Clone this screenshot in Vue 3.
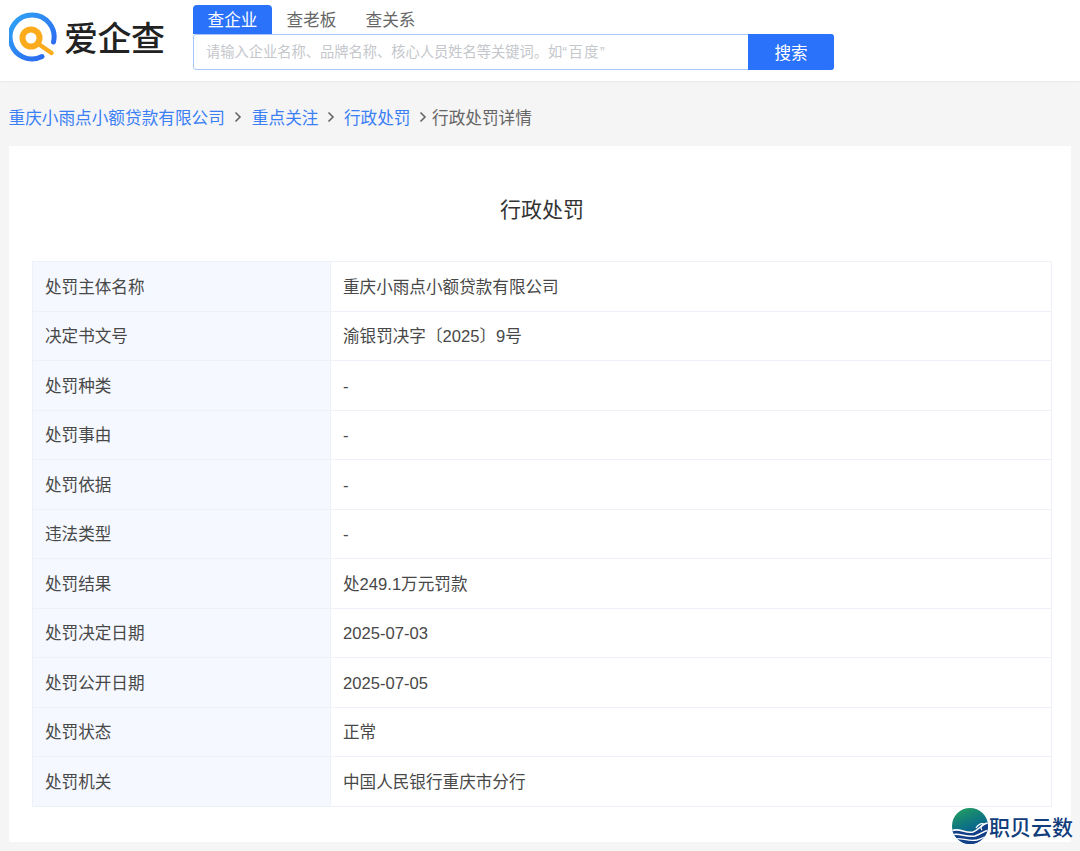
<template>
  <div class="page">
    <header class="top">
      <div class="logo">
        <svg class="logo-mark" width="50" height="50" viewBox="0 0 50 50">
          <defs>
            <linearGradient id="ring" x1="0" y1="0" x2="1" y2="1">
              <stop offset="0" stop-color="#2fa5f5" />
              <stop offset="1" stop-color="#2b62f0" />
            </linearGradient>
          </defs>
          <path d="M33 44.600A22 22 0 1 1 44.500 30" fill="none" stroke="url(#ring)" stroke-width="5" stroke-linecap="round" />
          <circle cx="22" cy="26" r="8.500" fill="none" stroke="#fbab1c" stroke-width="6" />
          <path d="M31 33L42.500 41" stroke="#fbab1c" stroke-width="4.500" stroke-linecap="round" />
        </svg>
        <span class="logo-text">爱企查</span>
      </div>
      <div class="search">
        <div class="tabs">
          <span v-for="(t, i) in tabs" :key="t" class="tab" :class="{ active: i === 0 }">{{ t }}</span>
        </div>
        <div class="search-box">
          <div class="search-input">请输入企业名称、品牌名称、核心人员姓名等关键词。如<span class="quoted">“百度”</span></div>
          <button class="search-btn">搜索</button>
        </div>
      </div>
    </header>

    <nav class="crumbs">
      <a>重庆小雨点小额贷款有限公司</a>
      <svg class="sep" width="8" height="12" viewBox="0 0 8 12"><path d="M1.500 1.500L6 6L1.500 10.500" fill="none" stroke="#666" stroke-width="1.600" /></svg>
      <a>重点关注</a>
      <svg class="sep mid" width="8" height="12" viewBox="0 0 8 12"><path d="M1.500 1.500L6 6L1.500 10.500" fill="none" stroke="#666" stroke-width="1.600" /></svg>
      <a>行政处罚</a>
      <svg class="sep last" width="8" height="12" viewBox="0 0 8 12"><path d="M1.500 1.500L6 6L1.500 10.500" fill="none" stroke="#666" stroke-width="1.600" /></svg>
      <span class="current">行政处罚详情</span>
    </nav>

    <main class="card">
      <h1 class="title">行政处罚</h1>
      <table class="detail">
        <tbody>
          <tr v-for="row in rows" :key="row[0]">
            <th>{{ row[0] }}</th>
            <td>{{ row[1] }}</td>
          </tr>
        </tbody>
      </table>
    </main>

    <div class="watermark">
      <svg width="38" height="38" viewBox="0 0 38 38">
        <defs>
          <linearGradient id="globe" x1="0.300" y1="0" x2="0.700" y2="1">
            <stop offset="0" stop-color="#1f9a63" />
            <stop offset="0.500" stop-color="#0d6f86" />
            <stop offset="1" stop-color="#0a3f8a" />
          </linearGradient>
          <clipPath id="disc"><circle cx="19" cy="19" r="18" /></clipPath>
        </defs>
        <circle cx="19" cy="19" r="18" fill="url(#globe)" />
        <g clip-path="url(#disc)">
          <path d="M0 24C8 21 14 26 20 25C26 24 27 17 37 16L38 38L0 38Z" fill="#123f86" />
          <g fill="none" stroke="#fff">
            <path d="M0 24C8 20 14 27 22 25C28 23 30 17 37 16" stroke-width="1.600" />
            <path d="M0 28C8 25 15 31 24 29C30 27 33 24 38 23" stroke-width="1.500" />
            <path d="M2 32C10 30 17 35 26 33C30 32 33 30 36 29" stroke-width="1.300" />
            <path d="M25 21C27 18 30 16 33 17C30 19 29 21 31 23" stroke-width="1.300" />
          </g>
        </g>
      </svg>
      <span>职贝云数</span>
    </div>
  </div>
</template>

<script setup>
const tabs = ['查企业', '查老板', '查关系']

const rows = [
  ['处罚主体名称', '重庆小雨点小额贷款有限公司'],
  ['决定书文号', '渝银罚决字〔2025〕9号'],
  ['处罚种类', '-'],
  ['处罚事由', '-'],
  ['处罚依据', '-'],
  ['违法类型', '-'],
  ['处罚结果', '处249.1万元罚款'],
  ['处罚决定日期', '2025-07-03'],
  ['处罚公开日期', '2025-07-05'],
  ['处罚状态', '正常'],
  ['处罚机关', '中国人民银行重庆市分行']
]
</script>

<style>
html, body {
  margin: 0;
  background: #f5f5f5;
}
</style>

<style scoped>
.page {
  position: relative;
  height: 851px;
  overflow: hidden;
  background: #f5f5f5;
  font-family: "Liberation Sans", "Noto Sans CJK SC", sans-serif;
  color: #333;
}

.top {
  display: flex;
  height: 81px;
  background: #fff;
  box-shadow: 0 1px 2px rgba(0, 0, 0, 0.05);
}

.logo {
  display: flex;
  align-items: center;
  width: 193px;
  height: 74px;
  padding-left: 9px;
  box-sizing: border-box;
}

.logo-mark {
  flex: none;
}

.logo-text {
  margin: -2px 0 0 5px;
  font-size: 34px;
  font-weight: 500;
  letter-spacing: -0.500px;
  color: #222;
}

.search {
  width: 641px;
  padding-top: 5px;
}

.tabs {
  display: flex;
  height: 29px;
}

.tab {
  width: 79px;
  line-height: 32px;
  text-align: center;
  font-size: 16.600px;
  color: #666;
}

.tab.active {
  background: #2b72fb;
  border-radius: 4px 4px 0 0;
  color: #fff;
}

.search-box {
  display: flex;
  height: 36px;
  box-sizing: border-box;
  border: 1px solid #a9c6fb;
  border-radius: 3px;
}

.search-input {
  flex: 1;
  padding-left: 12px;
  line-height: 34px;
  font-size: 14.250px;
  color: #c4c7cc;
}

.quoted {
  letter-spacing: 1.500px;
}

.search-btn {
  width: 86px;
  margin: -1px -1px -1px 0;
  border: none;
  border-radius: 0 3px 3px 0;
  background: #2b72fb;
  color: #fff;
  font-family: inherit;
  font-size: 16.600px;
}

.crumbs {
  display: flex;
  align-items: center;
  height: 65px;
  padding: 6px 0 0 8.500px;
  box-sizing: border-box;
  font-size: 16.650px;
}

.crumbs a {
  color: #3b7ff5;
}

.sep {
  margin: 0 10px 0 9px;
}

.sep.mid {
  margin-right: 8.500px;
}

.sep.last {
  margin-right: 5px;
  margin-left: 8.500px;
}

.current {
  color: #666;
}

.card {
  width: 1062px;
  height: 696px;
  margin-left: 9px;
  padding: 0 19px 0 23px;
  box-sizing: border-box;
  background: #fff;
}

.title {
  margin: 0;
  height: 115px;
  line-height: 127px;
  text-align: center;
  font-size: 21px;
  font-weight: 400;
  color: #333;
}

.detail {
  width: 1020px;
  table-layout: fixed;
  border-collapse: collapse;
  font-size: 16.600px;
  line-height: 24px;
}

.detail tr {
  height: 49.500px;
}

.detail th,
.detail td {
  padding: 3px 12px 0;
  border: 1px solid #eef2f8;
  text-align: left;
  font-weight: 400;
  color: #484848;
}

.detail th {
  width: 273px;
  background: #f5f8fe;
}

.watermark {
  position: absolute;
  right: 7px;
  bottom: 6px;
  display: flex;
  align-items: center;
  font-size: 21px;
  font-weight: 500;
  color: #123e7c;
}
</style>
